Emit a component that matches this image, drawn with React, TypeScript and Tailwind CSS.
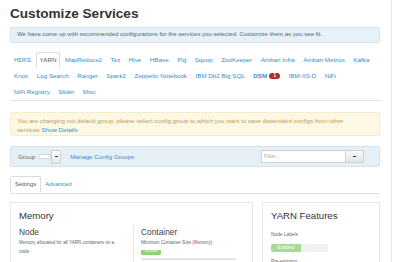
import React from 'react';

const rows: { name: string; badge?: string; active?: boolean; strong?: boolean }[][] = [
  [
    { name: 'HDFS' },
    { name: 'YARN', active: true },
    { name: 'MapReduce2' },
    { name: 'Tez' },
    { name: 'Hive' },
    { name: 'HBase' },
    { name: 'Pig' },
    { name: 'Sqoop' },
    { name: 'ZooKeeper' },
    { name: 'Ambari Infra' },
    { name: 'Ambari Metrics' },
    { name: 'Kafka' },
  ],
  [
    { name: 'Knox' },
    { name: 'Log Search' },
    { name: 'Ranger' },
    { name: 'Spark2' },
    { name: 'Zeppelin Notebook' },
    { name: 'IBM Db2 Big SQL' },
    { name: 'DSM', badge: '1', strong: true },
    { name: 'IBM-IIS-D' },
    { name: 'NiFi' },
  ],
  [{ name: 'NiFi Registry' }, { name: 'Slider' }, { name: 'Misc' }],
];

const Caret = () => <span className="block w-[3px] h-[1px] bg-[#333]"></span>;

export default function App() {
  return (
    <div className="w-[400px] h-[262px] overflow-hidden bg-white font-['Liberation_Sans',Arial,sans-serif] text-[#333]">
      <div className="w-[392px] h-[262px] border-r border-[#e6e6e6] pl-[10px] pr-[11px] pt-[5px]">
        {/* Header */}
        <h1 className="text-[13.6px] leading-[18px] font-bold text-[#333]">Customize Services</h1>
        <div className="mt-[4px] h-[16px] flex items-center px-[6px] border border-[#d5e5ee] bg-[#e7f1f7] rounded-[2px] text-[6.05px] whitespace-nowrap text-[#50697a]">
          We have come up with recommended configurations for the services you selected. Customize them as you see fit.
        </div>

        {/* Service tabs */}
        <div className="mt-[9px] border-b border-[#e2e2e2]">
          {rows.map((row, i) => (
            <div key={i} className="flex">
              {row.map((t) => (
                <div
                  key={t.name}
                  className={`h-[16px] flex items-center whitespace-nowrap px-[3px] mr-[0.5px] text-[6.25px] border rounded-t-[2px] ${
                    t.active ? 'border-[#dddddd] border-b-white bg-white text-[#555] -mb-px' : 'border-transparent text-[#3a8dcf]'
                  } ${t.strong ? 'font-bold text-[#2b6ea8]' : ''}`}
                >
                  <span>{t.name}</span>
                  {t.badge && (
                    <span className="ml-[2px] w-[11px] h-[6px] rounded-full bg-[#b52b27] text-white text-[4.5px] font-bold flex items-center justify-center">
                      {t.badge}
                    </span>
                  )}
                </div>
              ))}
            </div>
          ))}
        </div>

        {/* Warning */}
        <div className="mt-[11px] h-[24px] px-[6px] pt-[3px] border border-[#f6ecd0] bg-[#fcf8e3] rounded-[2px] text-[6.2px] leading-[9px] text-[#c0985a] whitespace-nowrap">
          You are changing not default group, please select config group to which you want to save dependent configs from other
          <br />
          services <span className="text-[#3a8dcf]">Show Details</span>
        </div>

        {/* Group bar */}
        <div className="mt-[10px] h-[21px] flex items-center justify-between pl-[7px] pr-[15px] border border-[#d3e3ec] bg-[#e5f0f6] rounded-[2px]">
          <div className="flex items-center text-[6.2px]">
            <span className="text-[#666]">Group</span>
            <div className="ml-[3px] flex items-center">
              <span className="w-[13px] h-[5px] rounded-l-[3px] border border-[#d7d7d7] bg-white"></span>
              <span className="w-[10px] h-[14px] flex items-center justify-center border border-[#cfcfcf] rounded-r-[2px] bg-gradient-to-b from-white to-[#e8e8e8]">
                <Caret />
              </span>
            </div>
            <span className="ml-[9px] text-[#3a8dcf]">Manage Config Groups</span>
          </div>
          <div className="flex items-center">
            <div className="w-[85px] h-[13px] flex items-center px-[2px] border border-[#d0d0d0] bg-white text-[5.2px] text-[#aaa]">
              Filter...
            </div>
            <span className="w-[18px] h-[13px] flex items-center justify-center border border-l-0 border-[#cfcfcf] rounded-r-[2px] bg-gradient-to-b from-[#fafafa] to-[#e4e4e4]">
              <Caret />
            </span>
          </div>
        </div>

        {/* Settings / Advanced */}
        <div className="mt-[9px] flex border-b border-[#e2e2e2]">
          <div className="h-[17px] -mb-px flex items-center px-[4px] border border-[#dddddd] border-b-white bg-white rounded-t-[2px] text-[5.9px] text-[#555]">
            Settings
          </div>
          <div className="h-[17px] flex items-center px-[4px] text-[5.9px] text-[#3a8dcf]">Advanced</div>
        </div>

        {/* Panels */}
        <div className="mt-[8px] flex gap-[9px]">
          <div className="w-[243px] h-[70px] border border-[#e6e6e6] pl-[8px] pt-[7px]">
            <div className="text-[9.6px] leading-[12px] text-[#333]">Memory</div>
            <div className="mt-[3px] flex">
              <div className="w-[115px] pt-[2px] pr-[14px] border-r border-[#e6e6e6] h-[40px]">
                <div className="text-[8.4px] leading-[11px] text-[#444]">Node</div>
                <div className="mt-[1px] text-[4.6px] leading-[8.5px] text-[#666]">
                  Memory allocated for all YARN containers on a node
                </div>
                <div className="mt-[6px] ml-[69px] w-[20px] h-[5px] rounded-[1px] bg-[#8fd07a] text-[3.6px] text-white flex items-center justify-center">
                  32768MB
                </div>
              </div>
              <div className="pl-[7px] pt-[2px]">
                <div className="text-[8.4px] leading-[11px] text-[#444]">Container</div>
                <div className="mt-[1px] text-[4.6px] leading-[8.5px] text-[#666]">Minimum Container Size (Memory)</div>
                <div className="mt-[2px] w-[20px] h-[5px] rounded-[1px] bg-[#8fd07a] text-[3.6px] text-white flex items-center justify-center">
                  1024MB
                </div>
                <div className="mt-[3px] w-[95px] h-[2px] bg-[#e3e3e3]"></div>
              </div>
            </div>
          </div>
          <div className="w-[118px] h-[70px] border border-[#e6e6e6] pl-[8px] pt-[7px]">
            <div className="text-[9.6px] leading-[12px] text-[#333]">YARN Features</div>
            <div className="mt-[9px] text-[4.8px] leading-[8px] text-[#666]">Node Labels</div>
            <div className="mt-[5px] w-[57px] h-[8px] flex rounded-[2px] overflow-hidden bg-[#f2f2f2]">
              <span className="w-[30px] h-[8px] bg-[#a8da97] text-white text-[4.6px] flex items-center justify-center">Enabled</span>
            </div>
            <div className="mt-[6px] text-[4.8px] leading-[8px] text-[#666]">Pre-emption</div>
          </div>
        </div>
      </div>
    </div>
  );
}
